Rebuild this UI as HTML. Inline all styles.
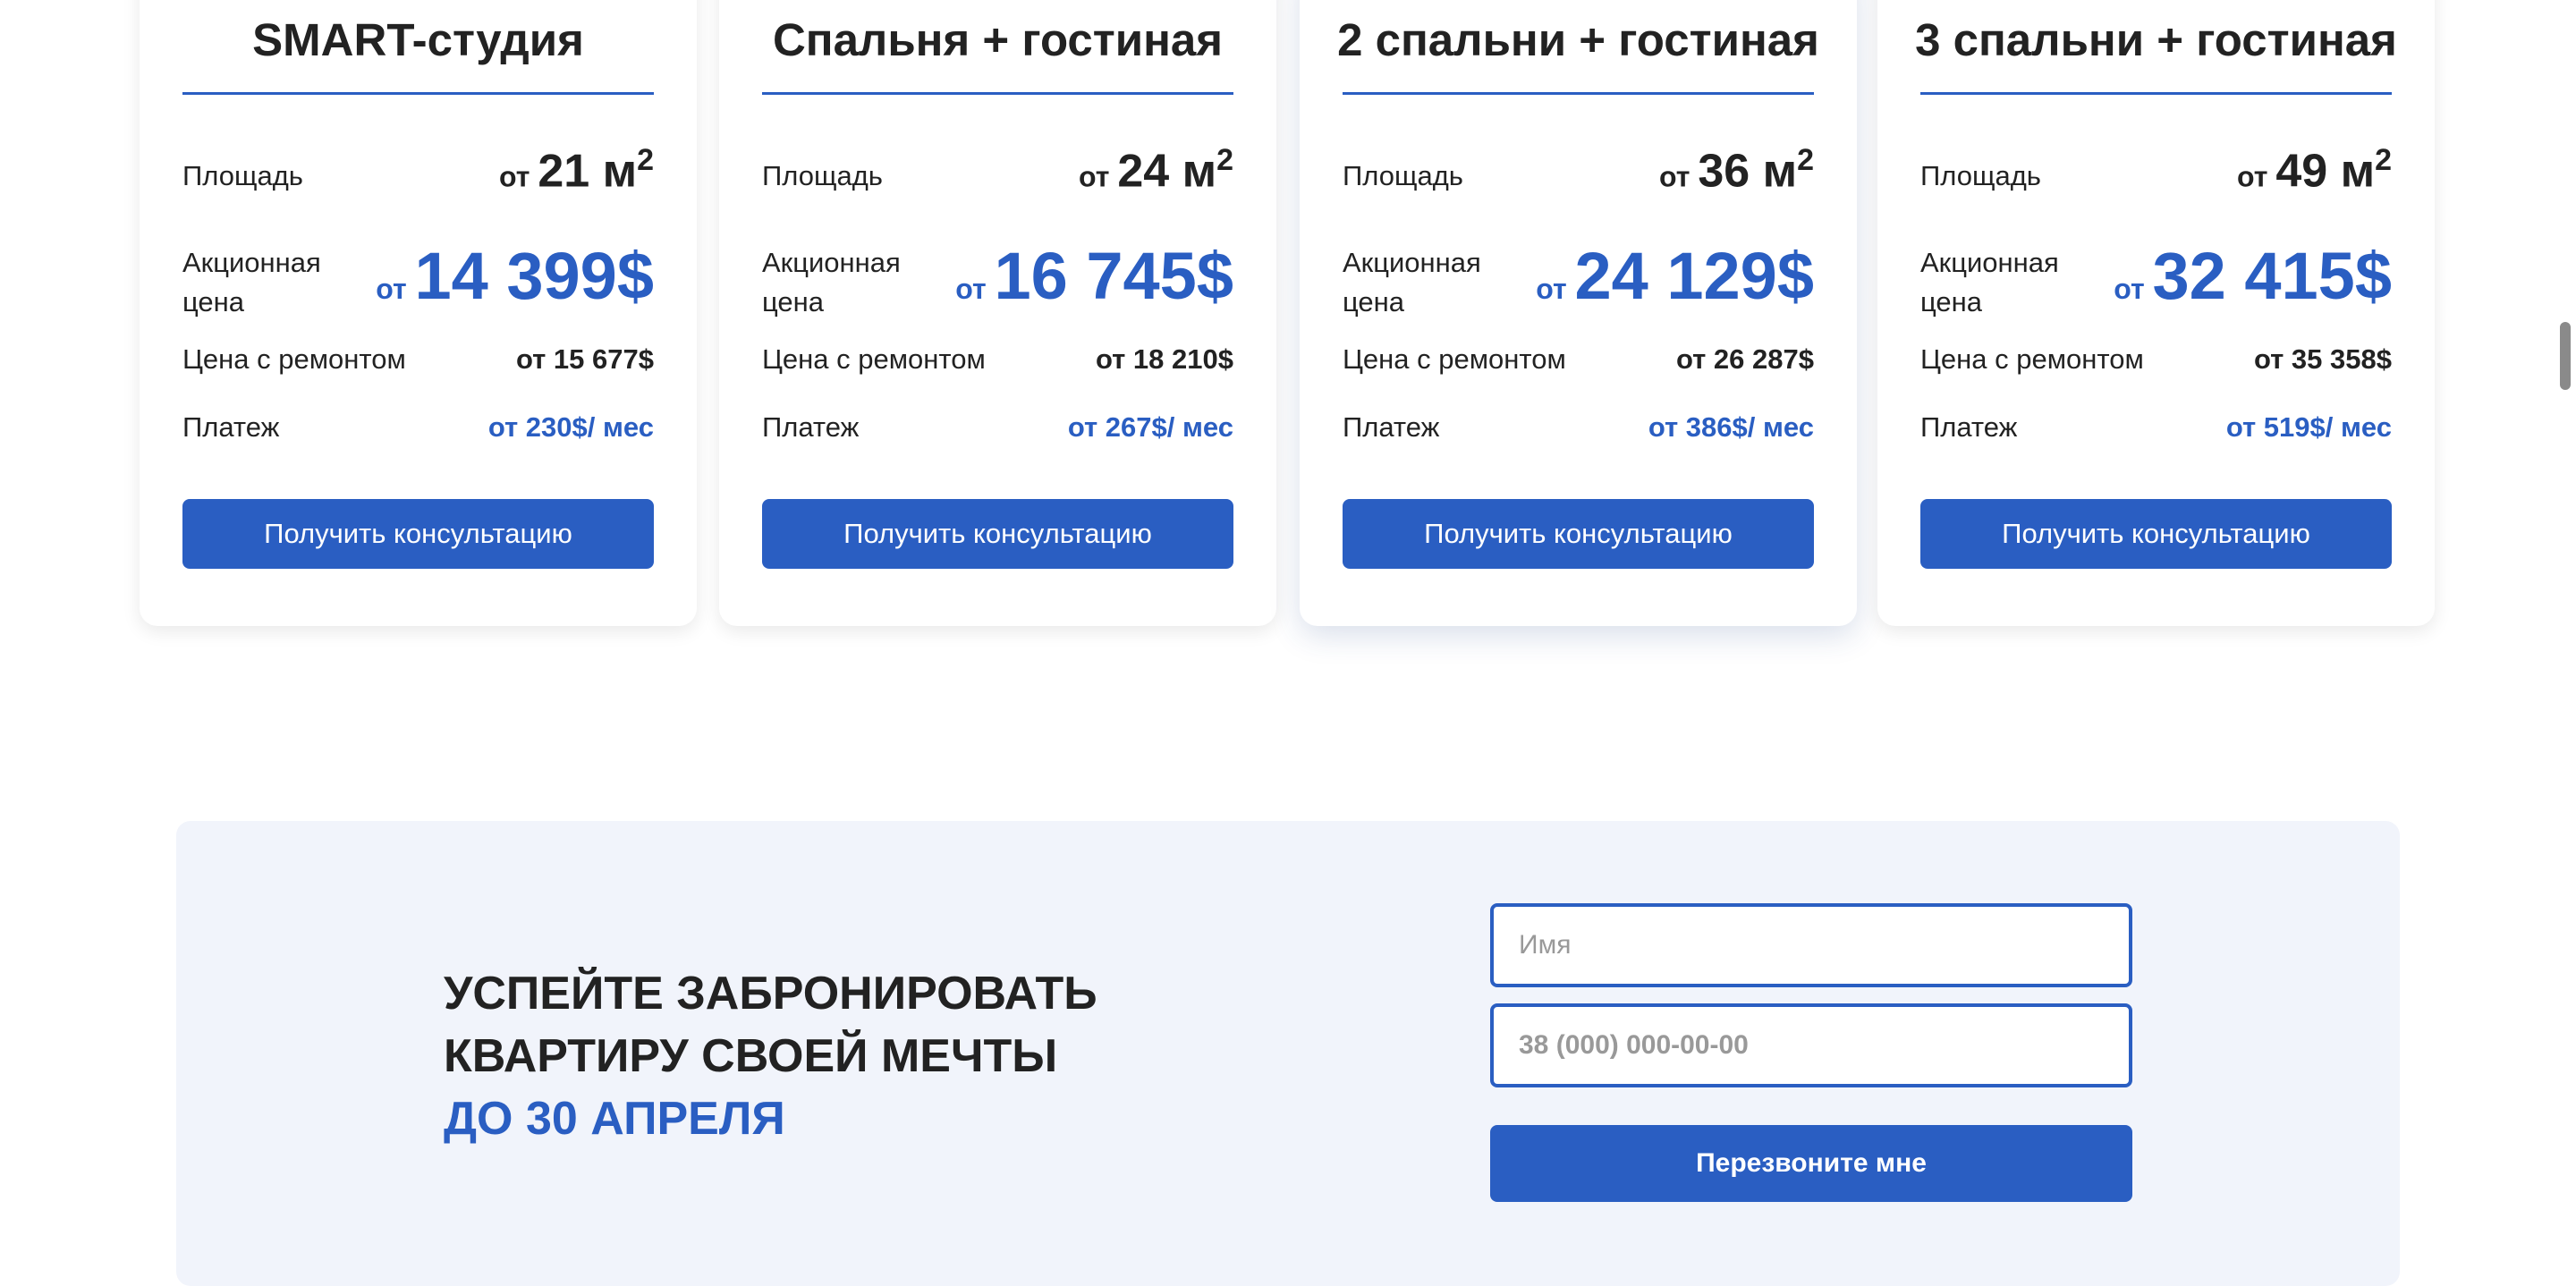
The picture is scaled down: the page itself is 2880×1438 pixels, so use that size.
<!DOCTYPE html>
<html><head><meta charset="utf-8"><style>
*{box-sizing:border-box;margin:0;padding:0}
body{width:2880px;height:1404px;background:#fff;font-family:"Liberation Sans",sans-serif;color:#222;position:relative;overflow:hidden}
.card{position:absolute;top:-40px;width:623px;height:740px;background:#fff;border-radius:20px;box-shadow:0 6px 20px rgba(0,0,0,0.09)}
.card.hl{box-shadow:0 10px 34px rgba(40,70,140,0.18)}
.t{position:absolute;left:0;right:0;top:55px;text-align:center;font-size:51px;font-weight:bold;color:#222}
.line{position:absolute;left:48px;right:48px;top:143px;height:3px;background:#2a5ec2}
.lab{position:absolute;left:48px;font-size:31px;color:#222}
.val{position:absolute;right:48px;font-weight:bold;text-align:right;white-space:nowrap}
.btn{position:absolute;left:48px;right:48px;top:598px;height:78px;background:#2a5ec2;border-radius:8px;color:#fff;font-size:31px;text-align:center;line-height:78px}
.blue{color:#2a5ec2}
.sec{position:absolute;left:197px;top:918px;width:2486px;height:520px;background:#f1f4fb;border-radius:16px}
.h{position:absolute;left:299px;font-size:52px;font-weight:bold;line-height:70px;top:158px}
.inp{position:absolute;left:1469px;width:718px;height:94px;border:4px solid #2a5ec2;border-radius:8px;background:#fff;font-size:30px;color:#999;padding-left:28px;line-height:86px}
.sb{position:absolute;left:2862px;top:360px;width:12px;height:76px;border-radius:6px;background:#8a8a8a}
</style></head><body>
<div class="card" style="left:156px">
<div class="t">SMART-студия</div><div class="line"></div>
<div class="lab" style="top:219px">Площадь</div>
<div class="val" style="top:200px;font-size:52px"><span style="font-size:32px">от </span>21 м<sup style="font-size:34px">2</sup></div>
<div class="lab" style="top:312px;line-height:44px">Акционная<br>цена</div>
<div class="val blue" style="top:306px;font-size:74px"><span style="font-size:32px">от </span>14 399$</div>
<div class="lab" style="top:424px">Цена с ремонтом</div>
<div class="val" style="top:424px;font-size:31px">от 15 677$</div>
<div class="lab" style="top:500px">Платеж</div>
<div class="val blue" style="top:500px;font-size:31px">от 230$/ мес</div>
<div class="btn">Получить консультацию</div></div>
<div class="card" style="left:804px">
<div class="t">Спальня + гостиная</div><div class="line"></div>
<div class="lab" style="top:219px">Площадь</div>
<div class="val" style="top:200px;font-size:52px"><span style="font-size:32px">от </span>24 м<sup style="font-size:34px">2</sup></div>
<div class="lab" style="top:312px;line-height:44px">Акционная<br>цена</div>
<div class="val blue" style="top:306px;font-size:74px"><span style="font-size:32px">от </span>16 745$</div>
<div class="lab" style="top:424px">Цена с ремонтом</div>
<div class="val" style="top:424px;font-size:31px">от 18 210$</div>
<div class="lab" style="top:500px">Платеж</div>
<div class="val blue" style="top:500px;font-size:31px">от 267$/ мес</div>
<div class="btn">Получить консультацию</div></div>
<div class="card hl" style="left:1453px">
<div class="t">2 спальни + гостиная</div><div class="line"></div>
<div class="lab" style="top:219px">Площадь</div>
<div class="val" style="top:200px;font-size:52px"><span style="font-size:32px">от </span>36 м<sup style="font-size:34px">2</sup></div>
<div class="lab" style="top:312px;line-height:44px">Акционная<br>цена</div>
<div class="val blue" style="top:306px;font-size:74px"><span style="font-size:32px">от </span>24 129$</div>
<div class="lab" style="top:424px">Цена с ремонтом</div>
<div class="val" style="top:424px;font-size:31px">от 26 287$</div>
<div class="lab" style="top:500px">Платеж</div>
<div class="val blue" style="top:500px;font-size:31px">от 386$/ мес</div>
<div class="btn">Получить консультацию</div></div>
<div class="card" style="left:2099px">
<div class="t">3 спальни + гостиная</div><div class="line"></div>
<div class="lab" style="top:219px">Площадь</div>
<div class="val" style="top:200px;font-size:52px"><span style="font-size:32px">от </span>49 м<sup style="font-size:34px">2</sup></div>
<div class="lab" style="top:312px;line-height:44px">Акционная<br>цена</div>
<div class="val blue" style="top:306px;font-size:74px"><span style="font-size:32px">от </span>32 415$</div>
<div class="lab" style="top:424px">Цена с ремонтом</div>
<div class="val" style="top:424px;font-size:31px">от 35 358$</div>
<div class="lab" style="top:500px">Платеж</div>
<div class="val blue" style="top:500px;font-size:31px">от 519$/ мес</div>
<div class="btn">Получить консультацию</div></div>
<div class="sb"></div>
<div class="sec">
<div class="h">УСПЕЙТЕ ЗАБРОНИРОВАТЬ<br>КВАРТИРУ СВОЕЙ МЕЧТЫ<br><span class="blue">ДО 30 АПРЕЛЯ</span></div>
<div class="inp" style="top:92px">Имя</div>
<div class="inp" style="top:204px;font-weight:bold">38 (000) 000-00-00</div>
<div class="btn" style="left:1469px;width:718px;right:auto;top:340px;height:86px;line-height:86px;font-weight:bold;font-size:30px">Перезвоните мне</div>
</div>
</body></html>
